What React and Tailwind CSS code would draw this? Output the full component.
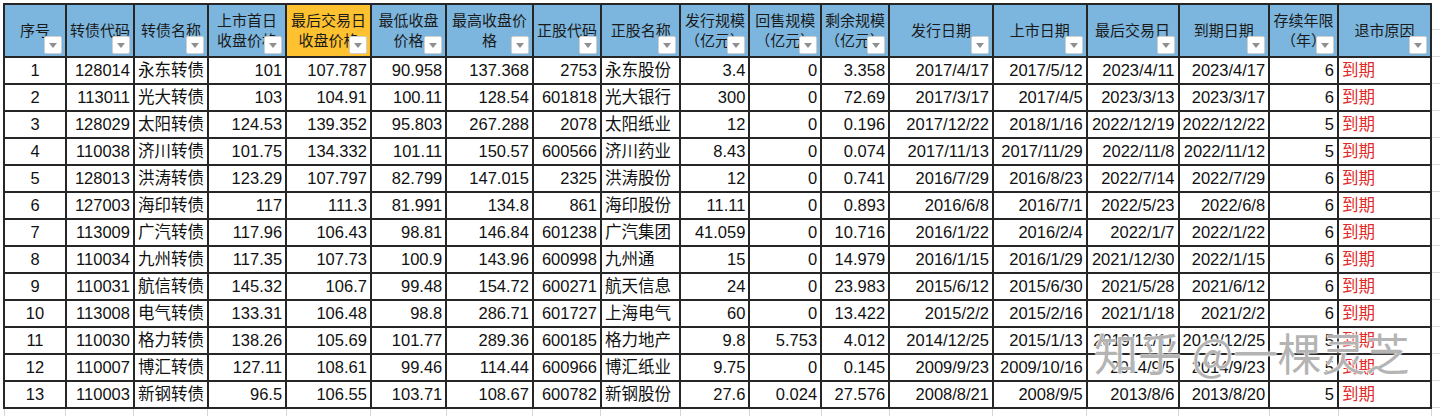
import React from "react";

const cols = [
  { w: 64, h: ["序号"], a: "c" },
  { w: 68, h: ["转债代码"], a: "r" },
  { w: 69, h: ["转债名称"], a: "l" },
  { w: 79, h: ["上市首日", "收盘价格"], a: "r" },
  { w: 85, h: ["最后交易日", "收盘价格"], a: "r", hl: true },
  { w: 76, h: ["最低收盘", "价格"], a: "r" },
  { w: 87, h: ["最高收盘价", "格"], a: "r" },
  { w: 67, h: ["正股代码"], a: "r" },
  { w: 80, h: ["正股名称"], a: "l" },
  { w: 69, h: ["发行规模", "（亿元）"], a: "r" },
  { w: 72, h: ["回售规模", "（亿元）"], a: "r" },
  { w: 68, h: ["剩余规模", "（亿元）"], a: "r" },
  { w: 105, h: ["发行日期"], a: "r" },
  { w: 94, h: ["上市日期"], a: "r" },
  { w: 92, h: ["最后交易日"], a: "r" },
  { w: 90, h: ["到期日期"], a: "r" },
  { w: 69, h: ["存续年限", "（年）"], a: "r" },
  { w: 95, h: ["退市原因"], a: "l", red: true },
];

const rows = [
  ["1", "128014", "永东转债", "101", "107.787", "90.958", "137.368", "2753", "永东股份", "3.4", "0", "3.358", "2017/4/17", "2017/5/12", "2023/4/11", "2023/4/17", "6", "到期"],
  ["2", "113011", "光大转债", "103", "104.91", "100.11", "128.54", "601818", "光大银行", "300", "0", "72.69", "2017/3/17", "2017/4/5", "2023/3/13", "2023/3/17", "6", "到期"],
  ["3", "128029", "太阳转债", "124.53", "139.352", "95.803", "267.288", "2078", "太阳纸业", "12", "0", "0.196", "2017/12/22", "2018/1/16", "2022/12/19", "2022/12/22", "5", "到期"],
  ["4", "110038", "济川转债", "101.75", "134.332", "101.11", "150.57", "600566", "济川药业", "8.43", "0", "0.074", "2017/11/13", "2017/11/29", "2022/11/8", "2022/11/12", "5", "到期"],
  ["5", "128013", "洪涛转债", "123.29", "107.797", "82.799", "147.015", "2325", "洪涛股份", "12", "0", "0.741", "2016/7/29", "2016/8/23", "2022/7/14", "2022/7/29", "6", "到期"],
  ["6", "127003", "海印转债", "117", "111.3", "81.991", "134.8", "861", "海印股份", "11.11", "0", "0.893", "2016/6/8", "2016/7/1", "2022/5/23", "2022/6/8", "6", "到期"],
  ["7", "113009", "广汽转债", "117.96", "106.43", "98.81", "146.84", "601238", "广汽集团", "41.059", "0", "10.716", "2016/1/22", "2016/2/4", "2022/1/7", "2022/1/22", "6", "到期"],
  ["8", "110034", "九州转债", "117.35", "107.73", "100.9", "143.96", "600998", "九州通", "15", "0", "14.979", "2016/1/15", "2016/1/29", "2021/12/30", "2022/1/15", "6", "到期"],
  ["9", "110031", "航信转债", "145.32", "106.7", "99.48", "154.72", "600271", "航天信息", "24", "0", "23.983", "2015/6/12", "2015/6/30", "2021/5/28", "2021/6/12", "6", "到期"],
  ["10", "113008", "电气转债", "133.31", "106.48", "98.8", "286.71", "601727", "上海电气", "60", "0", "13.422", "2015/2/2", "2015/2/16", "2021/1/18", "2021/2/2", "6", "到期"],
  ["11", "110030", "格力转债", "138.26", "105.69", "101.77", "289.36", "600185", "格力地产", "9.8", "5.753", "4.012", "2014/12/25", "2015/1/13", "2019/12/11", "2019/12/25", "5", "到期"],
  ["12", "110007", "博汇转债", "127.11", "108.61", "99.46", "114.44", "600966", "博汇纸业", "9.75", "0", "0.145", "2009/9/23", "2009/10/16", "2014/9/5", "2014/9/23", "5", "到期"],
  ["13", "110003", "新钢转债", "96.5", "106.55", "103.71", "108.67", "600782", "新钢股份", "27.6", "0.024", "27.576", "2008/8/21", "2008/9/5", "2013/8/6", "2013/8/20", "5", "到期"],
];

function FilterButton() {
  return (
    <span className="absolute right-[3px] bottom-[2px] flex h-[18px] w-[18px] items-center justify-center rounded-[2px] border border-[#cfcfcf] bg-white">
      <svg width="8" height="5" viewBox="0 0 8 5">
        <path d="M0 0h8L4 5z" fill="#8f8f8f" />
      </svg>
    </span>
  );
}

export default function App() {
  return (
    <div className="relative h-[416px] w-[1440px] overflow-hidden bg-white font-['Liberation_Sans','Noto_Sans_CJK_SC',sans-serif] text-[#111]">
      <div className="flex items-start">
        <table className="ml-[3px] mt-[3px] table-fixed border-collapse">
          <colgroup>
            {cols.map((c, i) => (
              <col key={i} style={{ width: c.w }} />
            ))}
          </colgroup>
          <thead>
            <tr className="h-[53px]">
              {cols.map((c, i) => (
                <th
                  key={i}
                  className={
                    "relative overflow-hidden border-2 border-[#262626] px-[3px] text-center align-middle text-[15px] font-normal leading-5 text-[#1a1a1a] " +
                    (c.hl ? "bg-[#fec12f]" : "bg-[#7cb5dd]")
                  }
                >
                  {c.h.map((line, j) => (
                    <div key={j} className="whitespace-nowrap">
                      {line}
                    </div>
                  ))}
                  <FilterButton />
                </th>
              ))}
            </tr>
          </thead>
          <tbody>
            {rows.map((r, ri) => (
              <tr key={ri} className="h-[27px]">
                {r.map((v, ci) => {
                  const c = cols[ci];
                  const align =
                    c.a === "c" ? "text-center" : c.a === "l" ? "text-left" : "text-right";
                  return (
                    <td
                      key={ci}
                      className={
                        "overflow-hidden whitespace-nowrap border-2 border-[#262626] px-[3px] align-middle text-[16.5px] leading-none " +
                        align +
                        (c.red ? " text-[#e02a2a]" : "")
                      }
                    >
                      {v}
                    </td>
                  );
                })}
              </tr>
            ))}
            <tr className="h-[27px]">
              {cols.map((c, i) => (
                <td key={i} className="border border-[#d6d6d6]"></td>
              ))}
            </tr>
          </tbody>
        </table>
        <div className="mt-[4px] flex w-[8px] flex-col">
          <div className="h-[26px] border-b border-[#dcdcdc]"></div>
          <div className="h-[27px] border-b border-[#dcdcdc]"></div>
          {rows.map((r, i) => (
            <div key={i} className="h-[27px] border-b border-[#dcdcdc]"></div>
          ))}
        </div>
      </div>
      <div className="pointer-events-none absolute left-[1094px] top-[330px] whitespace-nowrap font-['Noto_Sans_CJK_SC',sans-serif] text-[44px] font-normal leading-none text-[#9c9c9c]/75 [text-shadow:0_0_2px_#fff,0_0_2px_#fff,0_0_1px_#fff]">
        知乎 @一棵灵芝
      </div>
    </div>
  );
}
